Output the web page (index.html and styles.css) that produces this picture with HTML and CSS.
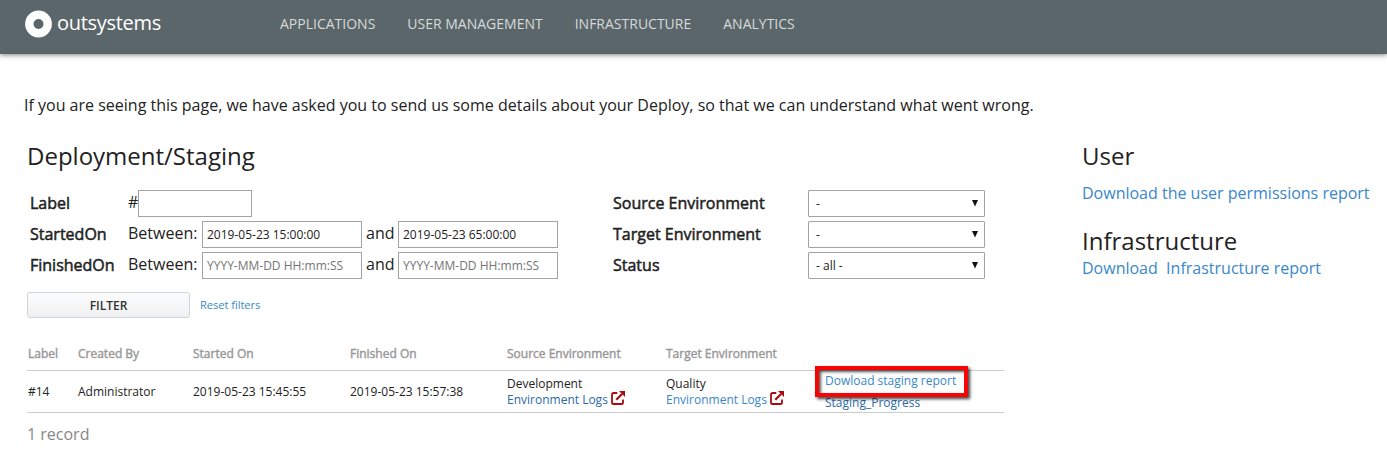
FILE: index.html
```
<!DOCTYPE html>
<html lang="en">
<head>
<meta charset="utf-8">
<title>Deployment/Staging</title>
<link rel="stylesheet" href="styles.css">
</head>
<body>
<header class="topbar">
  <div class="brand">
    <svg class="brand-mark" viewBox="0 0 27 27"><circle cx="13.5" cy="14" r="9.2" fill="none" stroke="#fff" stroke-width="8.4"/></svg>
    <span class="brand-name">outsystems</span>
  </div>
  <nav class="menu">
    <a>APPLICATIONS</a><a>USER MANAGEMENT</a><a>INFRASTRUCTURE</a><a>ANALYTICS</a>
  </nav>
</header>
<p class="intro">If you are seeing this page, we have asked you to send us some details about your Deploy, so that we can understand what went wrong.</p>
<div class="columns">
  <main class="main">
    <h1 class="title">Deployment/Staging</h1>
    <div class="filters">
      <span class="label">Label</span>
      <div class="value">#<input class="field field-short" type="text"></div>
      <span class="label">Source Environment</span>
      <div class="select"><span>-</span><svg class="caret" viewBox="0 0 6 7"><path d="M0 0h6L3 6.5z"/></svg></div>

      <span class="label">StartedOn</span>
      <div class="value"><span class="between">Between:</span><input class="field" type="text" value="2019-05-23 15:00:00"><span class="and">and</span><input class="field" type="text" value="2019-05-23 65:00:00"></div>
      <span class="label">Target Environment</span>
      <div class="select"><span>-</span><svg class="caret" viewBox="0 0 6 7"><path d="M0 0h6L3 6.5z"/></svg></div>

      <span class="label">FinishedOn</span>
      <div class="value"><span class="between">Between:</span><input class="field" type="text" placeholder="YYYY-MM-DD HH:mm:SS"><span class="and">and</span><input class="field" type="text" placeholder="YYYY-MM-DD HH:mm:SS"></div>
      <span class="label">Status</span>
      <div class="select"><span>- all -</span><svg class="caret" viewBox="0 0 6 7"><path d="M0 0h6L3 6.5z"/></svg></div>
    </div>
    <div class="actions"><button class="filter-btn">FILTER</button><a class="reset">Reset filters</a></div>
    <div class="records">
      <div class="row head"><span>Label</span><span>Created By</span><span>Started On</span><span>Finished On</span><span>Source Environment</span><span>Target Environment</span><span></span></div>
      <div class="row body">
        <span>#14</span><span>Administrator</span><span>2019-05-23 15:45:55</span><span>2019-05-23 15:57:38</span>
        <div class="env"><span>Development</span><span class="logs"><a class="visited">Environment Logs</a><svg class="ext" viewBox="0 0 14 14"><path d="M6.3 2H2.6Q1 2 1 3.6v7.8Q1 13 2.6 13h7.8q1.600 0 1.600-1.600V8.400" fill="none" stroke="#a90b10" stroke-width="1.800"/><path d="M5.300 8.700 11 3" stroke="#a90b10" stroke-width="2.200"/><path d="M8 0h6v6z" fill="#a90b10"/></svg></span></div>
        <div class="env"><span>Quality</span><span class="logs"><a>Environment Logs</a><svg class="ext" viewBox="0 0 14 14"><path d="M6.3 2H2.6Q1 2 1 3.6v7.8Q1 13 2.6 13h7.8q1.600 0 1.600-1.600V8.400" fill="none" stroke="#a90b10" stroke-width="1.800"/><path d="M5.300 8.700 11 3" stroke="#a90b10" stroke-width="2.200"/><path d="M8 0h6v6z" fill="#a90b10"/></svg></span></div>
        <div class="reports"><a>Dowload staging report</a><a class="visited">Staging_Progress</a><i class="highlight"></i></div>
      </div>
    </div>
    <p class="count">1 record</p>
  </main>
  <aside class="side">
    <h2 class="title">User</h2>
    <a class="user-link">Download the user permissions report</a>
    <h2 class="title">Infrastructure</h2>
    <a class="infra-link">Download&nbsp; Infrastructure report</a>
  </aside>
</div>
</body>
</html>
```
FILE: styles.css
```
* { box-sizing: border-box; }
body { margin: 0; background: #fff; color: #222; font: 400 16px/22px "Open Sans", sans-serif; overflow: hidden; }
a { color: #3a87c9; text-decoration: none; }
.topbar { height: 54px; background: #5b666a; box-shadow: 0 1px 5px rgba(0,0,0,.5); display: flex; align-items: flex-start; }
.brand { display: flex; width: 280px; padding: 10px 0 0 25px; }
.brand-mark { width: 27px; height: 27px; overflow: visible; }
.brand-name { margin-left: 5px; color: #fff; font-size: 20px; line-height: 25px; letter-spacing: -.3px; }
.menu { display: flex; gap: 32px; padding-top: 13px; }
.menu a { color: #d5dadb; font-size: 14px; }
.intro { margin: 0; padding: 40px 0 0 24px; height: 89px; white-space: nowrap; }
.columns { display: flex; }
.main { width: 977px; margin-left: 27px; }
.side { display: flex; flex-direction: column; margin-left: 78px; white-space: nowrap; }
.title { margin: 0; font-size: 24px; font-weight: 400; line-height: 26px; }
.filters { display: grid; grid-template-columns: 98px 485px 195px 177px; grid-auto-rows: 27px; row-gap: 4px; margin: 21px 0 0 3px; }
.label { font-weight: 400; line-height: 27px; -webkit-text-stroke: .5px #222; }
.value { display: flex; line-height: 24px; }
.between { width: 74px; }
.and { width: 36px; padding-left: 4px; }
.field { width: 160px; height: 27px; border: 1px solid #a3a3a3; padding: 0 4px; font: 12px "Open Sans", sans-serif; color: #222; background: #fff; outline: 0; }
.field::placeholder { color: #757575; }
.field-short { width: 114px; }
.select { display: flex; align-items: center; justify-content: space-between; border: 1px solid #a3a3a3; border-radius: 1px; padding: 0 6px 0 7px; font-size: 12px; }
.caret { width: 6px; height: 7px; fill: #111; }
.actions { display: flex; align-items: center; margin-top: 13px; height: 26px; }
.filter-btn { width: 163px; height: 26px; border: 1px solid #ccd5db; border-radius: 3px; background: linear-gradient(#fcfcfc, #f0f0f0); color: #333; font: 600 12px "Open Sans", sans-serif; padding: 0; }
.reset { margin-left: 10px; font-size: 11px; }
.records { margin-top: 18px; font-size: 12px; line-height: 17px; }
.row { display: grid; grid-template-columns: 50px 115px 157px 157px 159px 159px 179px; border-bottom: 1px solid #ccc; padding-left: 1px; white-space: nowrap; align-items: center; }
.head { height: 35px; color: #979797; -webkit-text-stroke: .4px #979797; }
.body { height: 42px; }
.env { display: flex; flex-direction: column; }
.logs { display: flex; height: 17px; line-height: 16px; }
.ext { width: 14px; height: 14px; margin: -1px 0 0 3px; }
.visited { color: #2b69a8; }
.reports { position: relative; display: flex; flex-direction: column; gap: 5px; }
.highlight { position: absolute; left: -10px; top: -6px; width: 153px; height: 31px; border: 4px solid #f80404; box-shadow: 2px 2px 3px rgba(0,0,0,.75), inset 2px 2px 3px rgba(0,0,0,.65); }
.count { margin: 10px 0 0; color: #888; }
.user-link { margin: 13px 0 24px; }
.infra-link { margin-top: 3px; }
```
